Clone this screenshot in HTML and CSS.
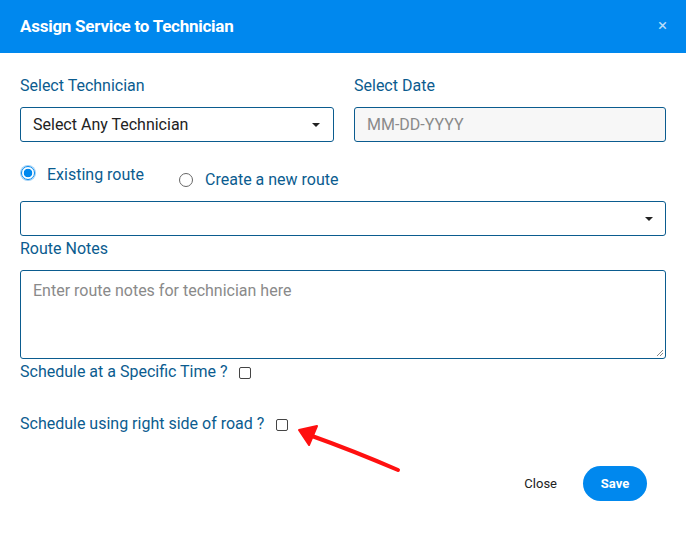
FILE: index.html
```html
<!DOCTYPE html>
<html lang="en">
<head>
<meta charset="utf-8">
<title>Assign Service to Technician</title>
<link rel="stylesheet" href="styles.css">
</head>
<body>
<div class="modal">
  <header class="modal-header">
    <h1 class="modal-title">Assign Service to Technician</h1>
    <span class="modal-close">×</span>
  </header>
  <div class="modal-body">
    <div class="row-two">
      <div class="field">
        <label class="field-label">Select Technician</label>
        <div class="select-box">
          <span class="select-text">Select Any Technician</span>
          <span class="caret"></span>
        </div>
      </div>
      <div class="field">
        <label class="field-label">Select Date</label>
        <div class="input-box input-disabled">
          <span class="placeholder">MM-DD-YYYY</span>
        </div>
      </div>
    </div>

    <div class="radio-row">
      <label class="radio-opt opt-existing"><span class="radio radio-on"></span>Existing route</label>
      <label class="radio-opt opt-new"><span class="radio"></span>Create a new route</label>
    </div>

    <div class="select-box select-wide">
      <span class="select-text"></span>
      <span class="caret"></span>
    </div>

    <label class="field-label notes-label">Route Notes</label>
    <div class="textarea-box">
      <span class="placeholder">Enter route notes for technician here</span>
      <svg class="grip" width="8" height="8" viewBox="0 0 8 8"><path d="M7 1 L1 7 M7 4 L4 7" stroke="#888" stroke-width="1" fill="none"/></svg>
    </div>

    <div class="check-row check-time">
      <span class="check-label">Schedule at a Specific Time ?</span>
      <span class="checkbox"></span>
    </div>

    <div class="check-row check-road">
      <span class="check-label">Schedule using right side of road ?</span>
      <span class="checkbox"></span>
    </div>

    <div class="actions">
      <button class="btn btn-link">Close</button>
      <button class="btn btn-primary">Save</button>
    </div>
  </div>

  <svg class="annotation" width="686" height="560" viewBox="0 0 686 560">
    <path d="M398 470 C370 458 340 446 312 436" stroke="#ff1010" stroke-width="4" fill="none" stroke-linecap="round"/>
    <path d="M299 430 L317 426 L309 445 Z" fill="#ff1010" stroke="#ff1010" stroke-width="2" stroke-linejoin="round"/>
  </svg>
</div>
</body>
</html>
```

FILE: styles.css
```css
* { box-sizing: border-box; }

html, body {
  margin: 0;
  padding: 0;
  background: #ffffff;
  font-family: Roboto, "Liberation Sans", sans-serif;
}

.modal {
  position: relative;
  width: 686px;
  height: 560px;
  background: #fff;
}

.modal-header {
  height: 53px;
  background: #0088ee;
  display: flex;
  align-items: center;
  justify-content: space-between;
  padding: 0 19px 2px 20px;
}

.modal-title {
  margin: 0;
  color: #fff;
  font-size: 17px;
  font-weight: 700;
  letter-spacing: -0.25px;
}

.modal-close {
  color: #b8dcfa;
  font-size: 17px;
  line-height: 1;
}

.modal-body {
  padding: 0 20px;
}

.row-two {
  display: grid;
  grid-template-columns: 314px 312px;
  column-gap: 20px;
  padding-top: 23px;
}

.field-label {
  display: block;
  color: #0b5c8f;
  font-size: 16px;
  line-height: 19px;
}

.field .field-label {
  margin-bottom: 12px;
}

.select-box,
.input-box {
  height: 35px;
  border: 1px solid #0b5c8f;
  border-radius: 3px;
  display: flex;
  align-items: center;
  justify-content: space-between;
  padding: 0 12px 0 12px;
  font-size: 16px;
}

.select-text {
  color: #222;
}

.caret {
  width: 0;
  height: 0;
  border-left: 4px solid transparent;
  border-right: 4px solid transparent;
  border-top: 4px solid #222;
  margin-right: 1px;
}

.input-disabled {
  background: #f7f7f7;
}

.placeholder {
  color: #8a8a8a;
  font-size: 16px;
}

.radio-row {
  display: flex;
  align-items: flex-start;
  height: 59px;
  padding-top: 22px;
}

.radio-opt {
  display: flex;
  align-items: center;
  color: #0b5c8f;
  font-size: 16px;
  line-height: 19px;
}

.opt-existing {
  margin-left: 1px;
  margin-top: 1px;
}

.opt-new {
  margin-left: 35px;
  margin-top: 6px;
}

.radio {
  width: 14px;
  height: 14px;
  border-radius: 50%;
  border: 1px solid #666;
  margin-right: 12px;
  background: #fff;
}

.radio-on {
  border: 1px solid #0088ee;
  background: radial-gradient(circle, #0088ee 0 4px, #fff 4.6px);
  box-shadow: 0 0 0 1px #9fd0f6;
  position: relative;
  top: -2px;
}

.select-wide {
  height: 35px;
}

.select-wide .caret {
  margin-right: 0;
}

.notes-label {
  margin-top: 3px;
  margin-bottom: 12px;
}

.textarea-box {
  position: relative;
  height: 89px;
  border: 1px solid #0b5c8f;
  border-radius: 3px;
  padding: 10px 12px;
}

.textarea-box .placeholder {
  display: block;
  line-height: 19px;
}

.grip {
  position: absolute;
  right: 1px;
  bottom: 1px;
}

.check-row {
  display: flex;
  align-items: center;
  color: #0b5c8f;
  font-size: 16px;
  line-height: 19px;
}

.check-time {
  margin-top: 3px;
}

.check-road {
  margin-top: 33px;
}

.checkbox {
  width: 12px;
  height: 12px;
  border: 1px solid #444;
  border-radius: 2px;
  margin-left: 11px;
  margin-top: 2px;
  background: #fff;
}

.check-road .checkbox {
  margin-left: 12px;
}

.actions {
  display: flex;
  justify-content: flex-end;
  align-items: center;
  margin-top: 33px;
  padding-right: 19px;
  gap: 26px;
}

.btn {
  font-family: Roboto, "Liberation Sans", sans-serif;
  font-size: 13px;
  border: none;
  cursor: pointer;
}

.btn-link {
  background: none;
  color: #222;
  padding: 0;
}

.btn-primary {
  background: #0088ee;
  color: #fff;
  font-weight: 700;
  width: 64px;
  height: 35px;
  border-radius: 18px;
}

.annotation {
  position: absolute;
  left: 0;
  top: 0;
  pointer-events: none;
}
```
